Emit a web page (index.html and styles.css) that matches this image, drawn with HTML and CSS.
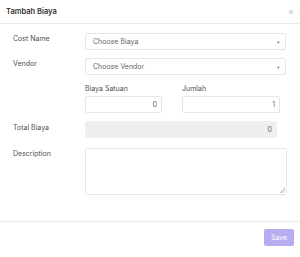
FILE: index.html
```html
<!DOCTYPE html>
<html lang="en">
<head>
    <meta charset="UTF-8">
    <meta name="viewport" content="width=device-width, initial-scale=1.0">
    <title>Tambah Biaya</title>
    <link rel="stylesheet" href="styles.css">
</head>
<body>
<div class="modal">
    <div class="modal-header">
        <span class="modal-title">Tambah Biaya</span>
        <span class="close">&times;</span>
    </div>
    <div class="modal-body">
        <div class="form-row">
            <label class="row-label">Cost Name</label>
            <div class="select select-wide">
                <span>Choose Biaya</span>
                <span class="caret">&#9662;</span>
            </div>
        </div>
        <div class="form-row">
            <label class="row-label">Vendor</label>
            <div class="select select-wide">
                <span>Choose Vendor</span>
                <span class="caret">&#9662;</span>
            </div>
        </div>
        <div class="form-row">
            <span class="row-label"></span>
            <div class="split">
                <div class="field field-satuan">
                    <label>Biaya Satuan</label>
                    <div class="input">0</div>
                </div>
                <div class="field field-jumlah">
                    <label>Jumlah</label>
                    <div class="input">1</div>
                </div>
            </div>
        </div>
        <div class="form-row row-total">
            <label class="row-label label-mid">Total Biaya</label>
            <div class="input input-total">0</div>
        </div>
        <div class="form-row">
            <label class="row-label">Description</label>
            <div class="textarea">
                <svg class="grip" width="6" height="6" viewBox="0 0 6 6">
                    <path d="M1 6 L6 1 M3.5 6 L6 3.5" stroke="#999" stroke-width="0.8"/>
                </svg>
            </div>
        </div>
    </div>
    <div class="modal-footer">
        <button class="save-btn" type="button">Save</button>
    </div>
</div>
</body>
</html>
```

FILE: styles.css
```css
body {
    margin: 0;
    font-family: Inter, "Noto Sans", sans-serif;
    font-size: 7px;
    color: #555;
    background: #fff;
}

.modal {
    width: 300px;
}

.modal-header {
    height: 24px;
    box-sizing: border-box;
    border-bottom: 1px solid #ececec;
    display: flex;
    align-items: center;
    justify-content: space-between;
    padding: 0 6px 1px 6px;
}

.modal-title {
    font-size: 7.5px;
    font-weight: 600;
    color: #333;
}

.close {
    font-size: 9px;
    color: #bbb;
}

.modal-body {
    padding: 9px 13px 26px 13px;
}

.form-row {
    display: flex;
    margin-bottom: 8px;
}

.form-row.row-total {
    margin-bottom: 10px;
}

.form-row:last-child {
    margin-bottom: 0;
}

.row-label {
    width: 72px;
    flex-shrink: 0;
    padding-top: 1px;
    color: #505050;
}

.label-mid {
    padding-top: 2px;
}

.select {
    height: 17px;
    box-sizing: border-box;
    border: 1px solid #e6e6e6;
    border-radius: 2px;
    display: flex;
    align-items: center;
    justify-content: space-between;
    padding: 0 5px 0 7px;
    color: #666;
}

.select-wide {
    width: 201px;
}

.caret {
    font-size: 5px;
    color: #888;
}

.split {
    display: flex;
    gap: 20px;
    padding-top: 1px;
}

.field label {
    display: block;
    color: #505050;
    margin-bottom: 3px;
}

.field-satuan {
    width: 77px;
}

.field-jumlah {
    width: 98px;
}

.input {
    height: 17px;
    box-sizing: border-box;
    border: 1px solid #e6e6e6;
    border-radius: 2px;
    display: flex;
    align-items: center;
    justify-content: flex-end;
    padding: 0 4px;
    color: #666;
}

.input-total {
    width: 192px;
    background: #efefef;
    border-color: #efefef;
}

.textarea {
    width: 202px;
    height: 47px;
    box-sizing: border-box;
    border: 1px solid #e6e6e6;
    border-radius: 2px;
    position: relative;
}

.grip {
    position: absolute;
    right: 1px;
    bottom: 1px;
}

.modal-footer {
    border-top: 1px solid #ececec;
    display: flex;
    justify-content: flex-end;
    padding: 7px 6px;
}

.save-btn {
    width: 30px;
    height: 17px;
    border: none;
    border-radius: 2px;
    background: #b5adf0;
    color: #fff;
    font-family: Inter, "Noto Sans", sans-serif;
    font-size: 7px;
    padding: 0;
}
```
